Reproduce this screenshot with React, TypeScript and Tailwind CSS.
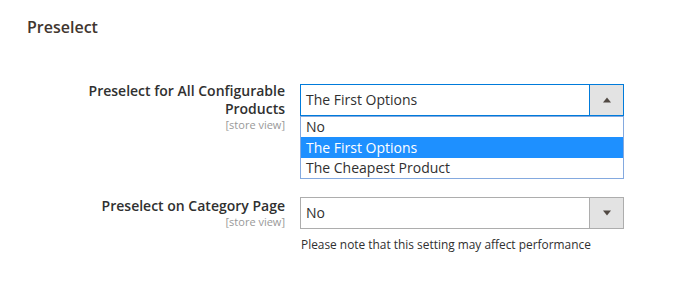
import React from "react";

function Arrow({ up }: { up?: boolean }) {
  return (
    <svg width="10" height="6" viewBox="0 0 10 6" className="block">
      {up ? (
        <polygon points="1,5.5 9,5.5 5,0.5" fill="#514943" />
      ) : (
        <polygon points="1,0.5 9,0.5 5,5.5" fill="#514943" />
      )}
    </svg>
  );
}

export default function App() {
  return (
    <div
      className="w-[685px] h-[299px] bg-white text-[#303030] overflow-hidden"
      style={{ fontFamily: '"Open Sans", "Liberation Sans", sans-serif' }}
    >
      <div className="pt-[17px] pl-[27px]">
        <h2 className="text-[16px] leading-[20px] font-semibold text-[#41362f]">Preselect</h2>
      </div>

      {/* Row 1 */}
      <div className="flex mt-[47px]">
        <div className="w-[285px] text-right -mt-[2px]">
          <div className="text-[14px] leading-[18px] font-semibold">
            Preselect for All Configurable
            <br />
            Products
          </div>
          <div className="text-[11px] leading-[13px] text-[#999999]">[store view]</div>
        </div>
        <div className="ml-[15px] relative w-[324px]">
          <div className="flex h-[32px] border border-[#007bdb] bg-white">
            <div className="flex-1 pl-[5px] text-[14px] leading-[30px]">The First Options</div>
            <div className="w-[34px] border-l border-[#007bdb] bg-[#e3e3e3] flex items-center justify-center">
              <Arrow up />
            </div>
          </div>
          <div className="absolute left-0 top-[32px] w-[324px] border border-[#84a9df] bg-white text-[14px]">
            <div className="h-[20px] leading-[20px] pl-[5px]">No</div>
            <div className="h-[21px] leading-[21px] pl-[5px] bg-[#1e90ff] text-white">The First Options</div>
            <div className="h-[20px] leading-[20px] pl-[5px]">The Cheapest Product</div>
          </div>
        </div>
      </div>

      {/* Row 2 */}
      <div className="flex mt-[66px]">
        <div className="w-[285px] text-right">
          <div className="text-[14px] leading-[18px] font-semibold">Preselect on Category Page</div>
          <div className="text-[11px] leading-[13px] text-[#999999]">[store view]</div>
        </div>
        <div className="ml-[15px] w-[324px]">
          <div className="flex h-[32px] border border-[#adadad] bg-white">
            <div className="flex-1 pl-[5px] text-[14px] leading-[30px]">No</div>
            <div className="w-[34px] border-l border-[#adadad] bg-[#e3e3e3] flex items-center justify-center">
              <Arrow />
            </div>
          </div>
          <div className="mt-[7px] pl-[1px] text-[11.9px] leading-[16px] text-[#303030]">
            Please note that this setting may affect performance
          </div>
        </div>
      </div>
    </div>
  );
}
